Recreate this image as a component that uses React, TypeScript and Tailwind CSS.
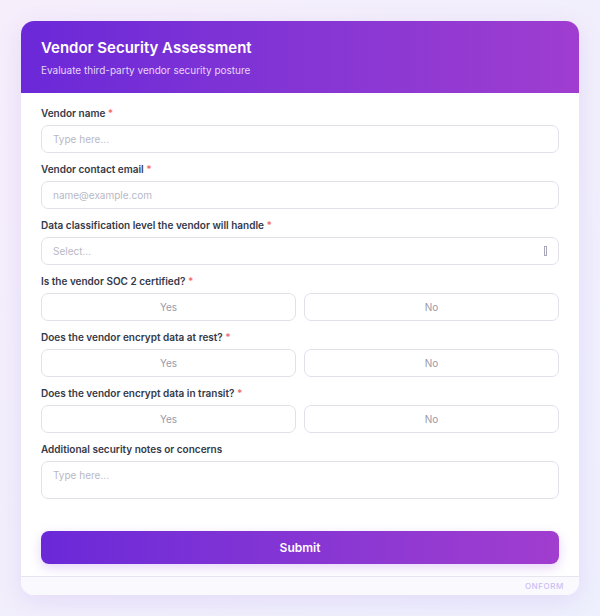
import React from "react";

const Label = ({ text, req = true }: { text: string; req?: boolean }) => (
  <div className="text-[10px] leading-[13px] font-semibold text-[#353949] mb-[5px]">
    {text}
    {req && <span className="text-[#f26b6b]"> *</span>}
  </div>
);

const Input = ({ ph }: { ph: string }) => (
  <div className="h-[28px] rounded-[7px] border-[1.5px] border-[#e2e1ea] bg-white flex items-center px-[11px] text-[10px] text-[#b9b8c6]">
    {ph}
  </div>
);

const YesNo = () => (
  <div className="grid grid-cols-2 gap-[8px]">
    <div className="h-[28px] rounded-[7px] border-[1.5px] border-[#e2e1ea] bg-white flex items-center justify-center text-[10px] text-[#9a99a8]">
      Yes
    </div>
    <div className="h-[28px] rounded-[7px] border-[1.5px] border-[#e2e1ea] bg-white flex items-center justify-center text-[10px] text-[#9a99a8]">
      No
    </div>
  </div>
);

export default function App() {
  return (
    <div
      className="w-[600px] h-[616px] p-[21px] bg-gradient-to-br from-[#f6eefb] to-[#eef0fd]"
      style={{ fontFamily: "Inter, 'Noto Sans', sans-serif" }}
    >
      <div className="w-[558px] h-[574px] rounded-[13px] bg-white overflow-hidden flex flex-col shadow-[0_6px_24px_rgba(140,90,220,0.14)]">
        <div className="h-[72px] bg-gradient-to-r from-[#6b28d8] to-[#9f3dd0] px-[20px] pt-[17px]">
          <div className="text-[15px] leading-[20px] font-semibold text-white">
            Vendor Security Assessment
          </div>
          <div className="mt-[5px] text-[10px] leading-[14px] text-[#e6d6f7]">
            Evaluate third-party vendor security posture
          </div>
        </div>
        <div className="flex-1 px-[20px] pt-[14px] flex flex-col">
          <div className="flex flex-col gap-[10px]">
            <div>
              <Label text="Vendor name" />
              <Input ph="Type here..." />
            </div>
            <div>
              <Label text="Vendor contact email" />
              <Input ph="name@example.com" />
            </div>
            <div>
              <Label text="Data classification level the vendor will handle" />
              <div className="h-[28px] rounded-[7px] border-[1.5px] border-[#e2e1ea] bg-white flex items-center justify-between px-[11px] text-[10px] text-[#b9b8c6]">
                <span>Select...</span>
                <span className="w-[3px] h-[10px] border border-[#a9a8b6]" />
              </div>
            </div>
            <div>
              <Label text="Is the vendor SOC 2 certified?" />
              <YesNo />
            </div>
            <div>
              <Label text="Does the vendor encrypt data at rest?" />
              <YesNo />
            </div>
            <div>
              <Label text="Does the vendor encrypt data in transit?" />
              <YesNo />
            </div>
            <div>
              <Label text="Additional security notes or concerns" req={false} />
              <div className="h-[38px] rounded-[7px] border-[1.5px] border-[#e2e1ea] bg-white px-[11px] pt-[7px] text-[10px] leading-[12px] text-[#b9b8c6]">
                Type here...
              </div>
            </div>
          </div>
          <div className="mt-[32px] h-[33px] rounded-[8px] bg-gradient-to-r from-[#6b28d8] to-[#a13dcf] flex items-center justify-center text-white text-[12px] font-semibold shadow-[0_4px_12px_rgba(140,60,220,0.22)]">
            Submit
          </div>
        </div>
        <div className="h-[19px] border-t border-[#e8e5f0] bg-[#faf9fe] flex items-center justify-end pr-[15px]">
          <span className="text-[8px] tracking-[0.6px] font-medium text-[#cbbdf5]">ONFORM</span>
        </div>
      </div>
    </div>
  );
}
